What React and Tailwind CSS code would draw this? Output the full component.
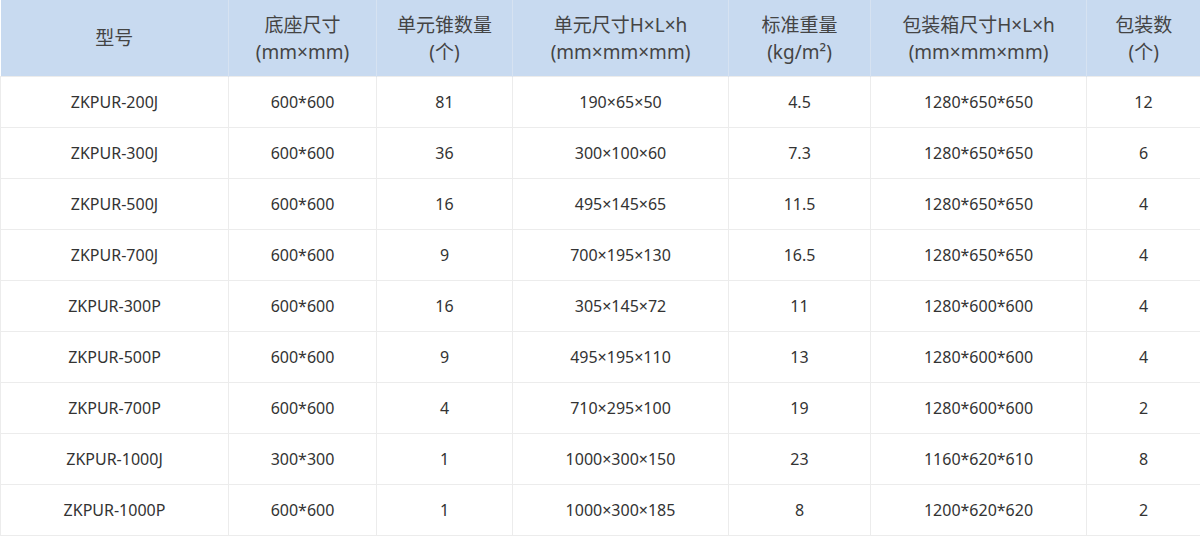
const COLUMNS = [
  { w: 'w-[228px]', lines: ['型号'] },
  { w: 'w-[148px]', lines: ['底座尺寸', '(mm×mm)'] },
  { w: 'w-[136px]', lines: ['单元锥数量', '(个)'] },
  { w: 'w-[216px]', lines: ['单元尺寸H×L×h', '(mm×mm×mm)'] },
  { w: 'w-[142px]', lines: ['标准重量', '(kg/m²)'] },
  { w: 'w-[216px]', lines: ['包装箱尺寸H×L×h', '(mm×mm×mm)'] },
  { w: 'w-[114px]', lines: ['包装数', '(个)'] },
];

const ROWS = [
  ['ZKPUR-200J', '600*600', '81', '190×65×50', '4.5', '1280*650*650', '12'],
  ['ZKPUR-300J', '600*600', '36', '300×100×60', '7.3', '1280*650*650', '6'],
  ['ZKPUR-500J', '600*600', '16', '495×145×65', '11.5', '1280*650*650', '4'],
  ['ZKPUR-700J', '600*600', '9', '700×195×130', '16.5', '1280*650*650', '4'],
  ['ZKPUR-300P', '600*600', '16', '305×145×72', '11', '1280*600*600', '4'],
  ['ZKPUR-500P', '600*600', '9', '495×195×110', '13', '1280*600*600', '4'],
  ['ZKPUR-700P', '600*600', '4', '710×295×100', '19', '1280*600*600', '2'],
  ['ZKPUR-1000J', '300*300', '1', '1000×300×150', '23', '1160*620*610', '8'],
  ['ZKPUR-1000P', '600*600', '1', '1000×300×185', '8', '1200*620*620', '2'],
];

export default function App() {
  return (
    <div className="w-[1200px] h-[538px] bg-white overflow-hidden font-['Noto_Sans','Noto_Sans_CJK_SC',sans-serif] text-[#333]">
      <table className="w-full table-fixed border-collapse">
        <thead>
          <tr className="h-[76px] bg-[#c8daf0]">
            {COLUMNS.map((col, i) => (
              <th
                key={i}
                className={`${col.w} font-normal text-[19px] leading-[27px] pt-[2px] text-[#444] text-center align-middle border-l border-[#d6e2f1] first:border-l-0`}
              >
                {col.lines.map(l => (
                  <div key={l}>{l}</div>
                ))}
              </th>
            ))}
          </tr>
        </thead>
        <tbody>
          {ROWS.map(row => (
            <tr key={row[0]} className="h-[51px]">
              {row.map((cell, i) => (
                <td
                  key={i}
                  className="text-[16px] text-center align-middle border border-[#ececec]"
                >
                  {cell}
                </td>
              ))}
            </tr>
          ))}
        </tbody>
      </table>
    </div>
  );
}
